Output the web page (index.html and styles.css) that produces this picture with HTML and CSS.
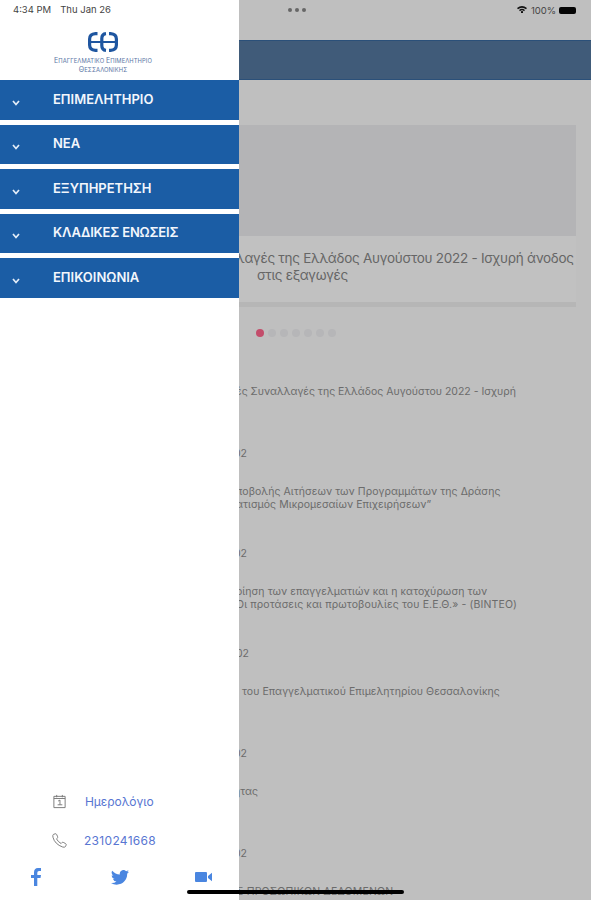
FILE: index.html
```html
<!DOCTYPE html>
<html lang="el">
<head>
    <meta charset="UTF-8">
    <meta name="viewport" content="width=device-width, initial-scale=1.0">
    <title>Επαγγελματικό Επιμελητήριο Θεσσαλονίκης</title>
    <link rel="stylesheet" href="styles.css">
</head>
<body>
    <aside class="drawer">
        <div class="status">
            <span class="time">4:34 PM</span>
            <span class="date">Thu Jan 26</span>
        </div>
        <div class="brand">
            <svg class="logo" viewBox="0 0 32 20" fill="none" stroke="#1f56a0" stroke-width="3.2">
                <path d="M10.500 1.600H8.500Q2.600 2 2.600 7V13Q2.600 18 8.500 18.400H10.500"/>
                <path d="M19 1.600Q14.800 2 14.800 6.500V13.500Q14.800 18 19 18.400"/>
                <path d="M22 1.600H23.500Q29.400 2 29.400 7V13Q29.400 18 23.500 18.400H22"/>
                <path d="M2 10H30" stroke-width="2"/>
            </svg>
            <p class="brand-name"><b>Ε</b>ΠΑΓΓΕΛΜΑΤΙΚΟ <b>Ε</b>ΠΙΜΕΛΗΤΗΡΙΟ</p>
            <p class="brand-name second"><b>Θ</b>ΕΣΣΑΛΟΝΙΚΗΣ</p>
        </div>
        <nav class="menu">
            <a class="menu-item"><svg class="chevron" viewBox="0 0 8 6"><path d="M1 1L4 4.500L7 1"/></svg><span>ΕΠΙΜΕΛΗΤΗΡΙΟ</span></a>
            <a class="menu-item"><svg class="chevron" viewBox="0 0 8 6"><path d="M1 1L4 4.500L7 1"/></svg><span>ΝΕΑ</span></a>
            <a class="menu-item"><svg class="chevron" viewBox="0 0 8 6"><path d="M1 1L4 4.500L7 1"/></svg><span>ΕΞΥΠΗΡΕΤΗΣΗ</span></a>
            <a class="menu-item"><svg class="chevron" viewBox="0 0 8 6"><path d="M1 1L4 4.500L7 1"/></svg><span class="long">ΚΛΑΔΙΚΕΣ ΕΝΩΣΕΙΣ</span></a>
            <a class="menu-item"><svg class="chevron" viewBox="0 0 8 6"><path d="M1 1L4 4.500L7 1"/></svg><span>ΕΠΙΚΟΙΝΩΝΙΑ</span></a>
        </nav>
        <div class="contact">
            <a class="contact-row">
                <svg class="contact-icon" viewBox="0 0 16 16"><path d="M2 2.500H14V14.500H2ZM2 4.800H14M5 1V3.500M11 1V3.500M6.500 7.500L8.500 6.500V11.500M6 11.500H11"/></svg>
                <span class="calendar">Ημερολόγιο</span>
            </a>
            <a class="contact-row">
                <svg class="contact-icon" viewBox="0 0 16 16"><path d="M1.500 1.500L3.500 .8Q4.500 .6 5 1.700L6 4Q6.300 5 5.500 5.600L4.800 6.300Q6.500 9.500 9.700 11.200L10.500 10.300Q11.200 9.700 12 10L14.500 11.300Q15.500 12 15 13L14.300 14.500Q13.500 15.500 11.500 15Q3 12 1 4.500Q.5 2.300 1.500 1.500Z"/></svg>
                <span class="phone">2310241668</span>
            </a>
        </div>
        <div class="social">
            <svg class="facebook" viewBox="0 0 10 18"><path d="M3 18V10H0V7H3V4.500Q3 0 7 0H10V3H8Q6.300 3 6.300 4.700V7H10L9.500 10H6.300V18Z"/></svg>
            <svg class="twitter" viewBox="0 0 24 20"><path d="M24 2.370a10 10 0 0 1-2.830.780A4.900 4.900 0 0 0 23.340.420a10 10 0 0 1-3.130 1.200 4.920 4.920 0 0 0-8.390 4.490A14 14 0 0 1 1.670.970a4.930 4.930 0 0 0 1.520 6.570 5 5 0 0 1-2.230-.620 4.930 4.930 0 0 0 3.950 4.890 5 5 0 0 1-2.220.080 4.930 4.930 0 0 0 4.600 3.420A9.900 9.900 0 0 1 0 17.350 14 14 0 0 0 7.550 19.560C16.700 19.560 22 11.800 21.540 4.920A10 10 0 0 0 24 2.370Z"/></svg>
            <svg class="video" viewBox="0 0 17 10"><path d="M0 1Q0 0 1 0H11Q12 0 12 1V9Q12 10 11 10H1Q0 10 0 9ZM13 4L17 .8V9.200L13 6Z"/></svg>
        </div>
    </aside>

    <main class="page">
        <div class="page-status">
            <span class="dots"><i></i><i></i><i></i></span>
            <svg class="wifi" viewBox="0 0 10 8" fill="none" stroke="#111" stroke-width="1.500"><path d="M.5 2.700Q5-1 9.500 2.700M2.500 4.600Q5 2.600 7.500 4.600"/><path d="M4 6L5 5.300L6 6L5 7Z" stroke-width="1"/></svg>
            <span class="percent">100%</span>
            <span class="battery"></span>
        </div>
        <header class="navbar"></header>
        <article class="card">
            <div class="card-image"></div>
            <div class="card-body">
                <p class="card-title">λαγές της Ελλάδος Αυγούστου 2022 - Ισχυρή άνοδος</p>
                <p class="card-title last">στις εξαγωγές</p>
            </div>
        </article>
        <div class="pager"><i class="active"></i><i></i><i></i><i></i><i></i><i></i><i></i></div>
        <section class="news">
            <div class="news-item">
                <p class="news-title">ές Συναλλαγές της Ελλάδος Αυγούστου 2022 - Ισχυρή</p>
                <p class="news-date">02</p>
            </div>
            <div class="news-item">
                <p class="news-title spaced">ποβολής Αιτήσεων των Προγραμμάτων της Δράσης<br>ατισμός Μικρομεσαίων Επιχειρήσεων”</p>
                <p class="news-date">02</p>
            </div>
            <div class="news-item">
                <p class="news-title spaced">οίηση των επαγγελματιών και η κατοχύρωση των<br><span class="wide">Οι προτάσεις και πρωτοβουλίες του Ε.Ε.Θ.» - (ΒΙΝΤΕΟ)</span></p>
                <p class="news-date shifted">02</p>
            </div>
            <div class="news-item">
                <p class="news-title spaced inset">του Επαγγελματικού Επιμελητηρίου Θεσσαλονίκης</p>
                <p class="news-date">02</p>
            </div>
            <div class="news-item">
                <p class="news-title short">ητας</p>
                <p class="news-date">02</p>
            </div>
            <div class="news-item">
                <p class="news-title caps">Σ ΠΡΟΣΩΠΙΚΩΝ ΔΕΔΟΜΕΝΩΝ</p>
            </div>
        </section>
    </main>
    <div class="home-indicator"></div>
</body>
</html>
```
FILE: styles.css
```css
:root {
    --primary: #1b5da5;
    --backdrop: #bfbfbf;
    --link: #5876d2;
    --social: #4a86e0;
}

* {
    margin: 0;
    padding: 0;
    box-sizing: border-box;
}

body {
    display: grid;
    grid-template-columns: 239px 1fr;
    width: 591px;
    height: 900px;
    overflow: hidden;
    position: relative;
    background: var(--backdrop);
    font-family: Inter, "Liberation Sans", sans-serif;
    white-space: nowrap;
}

svg {
    display: block;
    flex: none;
}

/* Drawer */
.drawer {
    display: flex;
    flex-direction: column;
    height: 900px;
    background: #fff;
    overflow: hidden;
}

.status {
    display: flex;
    gap: 9px;
    height: 30px;
    padding: 4px 0 0 13px;
    font-size: 9.5px;
    line-height: 12px;
    color: #444;
}

.brand {
    display: flex;
    flex-direction: column;
    align-items: center;
    height: 50px;
    padding: 2px 33px 0 0;
}

.logo {
    width: 32px;
    height: 20px;
}

.brand-name {
    margin-top: 5px;
    font-size: 5.8px;
    line-height: 8px;
    letter-spacing: 0.1px;
    color: #5b76a5;
}

.brand-name b {
    font-size: 7px;
    font-weight: 400;
}

.second {
    margin-top: 1px;
}

.menu {
    display: flex;
    flex-direction: column;
    gap: 5px;
}

.menu-item {
    display: flex;
    align-items: center;
    height: 39.5px;
    padding: 0 0 2px 12px;
    background: var(--primary);
    color: #f2f6fc;
    font-size: 13px;
    font-weight: 600;
}

.menu-item .long {
    letter-spacing: -0.17px;
}

.chevron {
    width: 8px;
    height: 6px;
    margin: 8px 33px 0 0;
    fill: none;
    stroke: #e4edf8;
    stroke-width: 1.7;
}

.contact {
    margin-top: auto;
    padding-left: 52px;
}

.contact-row {
    display: flex;
    align-items: center;
    gap: 18px;
    height: 39px;
    font-size: 12px;
    color: var(--link);
}

.calendar {
    letter-spacing: -0.05px;
}

.phone {
    margin-left: -1px;
    letter-spacing: 0.3px;
}

.contact-icon {
    width: 15px;
    height: 15px;
    fill: none;
    stroke: #777;
    stroke-width: 1;
}

.social {
    display: flex;
    align-items: center;
    height: 34px;
    margin-bottom: 6px;
    padding-left: 31px;
    fill: var(--social);
}

.facebook {
    width: 10px;
    height: 18px;
}

.twitter {
    width: 18px;
    height: 15px;
    margin-left: 70px;
}

.video {
    width: 17px;
    height: 10px;
    margin-left: 66px;
}

/* Dimmed page */
.page {
    height: 900px;
    overflow: hidden;
}

.page-status {
    display: flex;
    align-items: center;
    height: 20px;
    margin-bottom: 20px;
    padding-left: 49px;
    color: #444;
    font-size: 9.5px;
}

.dots {
    display: flex;
    gap: 3px;
    width: 229px;
}

.dots i {
    width: 4px;
    height: 4px;
    border-radius: 50%;
    background: #666;
}

.wifi {
    width: 10px;
    height: 8px;
}

.percent {
    width: 25px;
    margin: 0 3px 0 4px;
}

.battery {
    width: 17px;
    height: 7px;
    border-radius: 2px;
    background: #050505;
}

.navbar {
    height: 40px;
    background: #405b79;
    border: 1px solid #2b5079;
    border-width: 1px 0;
}

.card {
    width: 337px;
    height: 182px;
    margin-top: 45px;
    background: #c1c1c1;
    border-bottom: 5px solid #b6b6b6;
}

.card-image {
    height: 111px;
    background: #b4b4b6;
}

.card-body {
    padding-top: 14px;
    color: #666;
    font-size: 13.5px;
    line-height: 17px;
    letter-spacing: -0.27px;
}

.card-title {
    margin-left: -3px;
}

.card-title.last {
    margin-left: 18px;
}

.pager {
    display: flex;
    gap: 4px;
    padding: 22px 0 0 17px;
}

.pager i {
    width: 8px;
    height: 8px;
    border-radius: 50%;
    background: #b6b6b8;
}

.pager .active {
    background: #c34d6b;
}

.news {
    margin-top: 48px;
    color: #6b6b6b;
    font-size: 10.5px;
    line-height: 13px;
}

.news-item {
    height: 100px;
}

.news-title {
    height: 62px;
    margin-left: -3px;
}

.spaced {
    letter-spacing: 0.06px;
}

.wide {
    letter-spacing: 0.13px;
}

.inset {
    margin-left: 3px;
}

.short {
    margin-left: -5px;
}

.caps {
    letter-spacing: 0.22px;
}

.news-date {
    margin-left: -5px;
}

.shifted {
    margin-left: -3px;
}

.home-indicator {
    position: absolute;
    left: 187px;
    bottom: 6px;
    width: 217px;
    height: 4px;
    border-radius: 2px;
    background: #000;
}
```
